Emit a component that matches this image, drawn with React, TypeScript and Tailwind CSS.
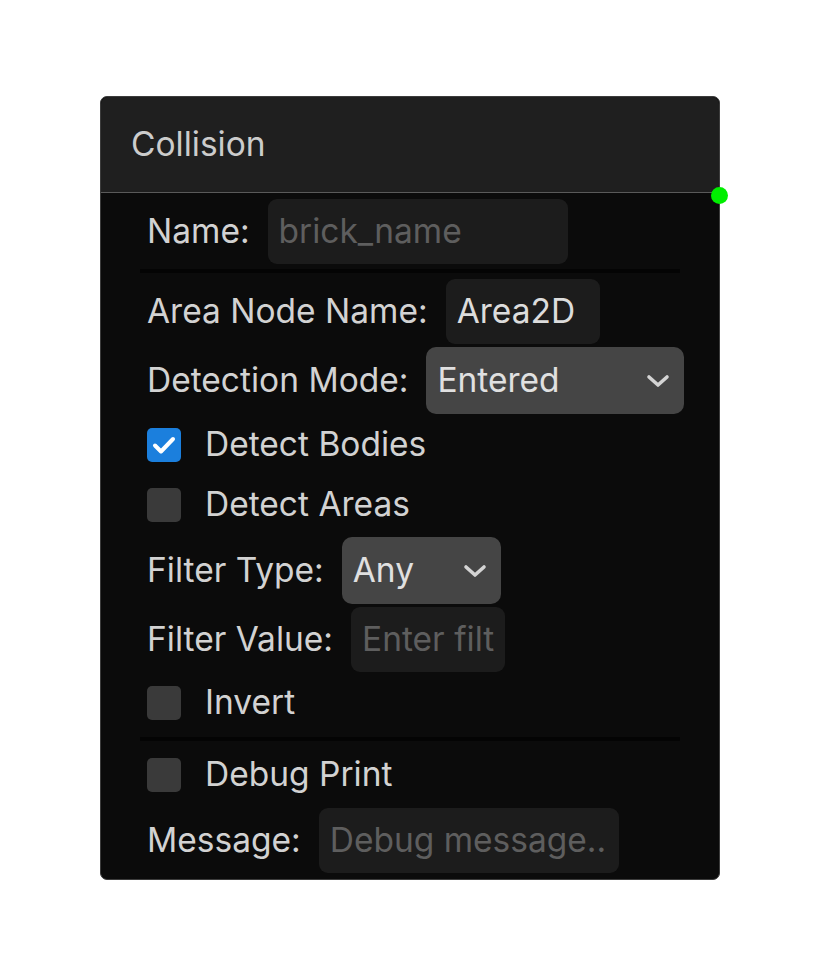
import React from 'react';

const Chevron = () => (
  <svg width="24" height="14" viewBox="0 0 24 14" fill="none" className="shrink-0">
    <path d="M3 3l9 8 9-8" stroke="#d4d4d4" strokeWidth="3.6" strokeLinecap="round" strokeLinejoin="round" />
  </svg>
);

const Label = ({ children }: { children: React.ReactNode }) => (
  <span className="text-[33.5px] leading-none text-[#d2d2d2] whitespace-nowrap">{children}</span>
);

const TextField = ({ value, placeholder, width }: { value?: string; placeholder?: string; width: string }) => (
  <div className={`h-[65px] ${width} shrink-0 rounded-[9px] bg-[#1c1c1c] pl-[11px] flex items-center overflow-hidden`}>
    {value ? (
      <span className="text-[33.5px] leading-none text-[#dcdcdc] whitespace-nowrap">{value}</span>
    ) : (
      <span className="text-[33.5px] leading-none text-[#5e5e5e] whitespace-nowrap">{placeholder}</span>
    )}
  </div>
);

const SelectField = ({ value, width }: { value: string; width: string }) => (
  <div className={`h-[67px] ${width} shrink-0 rounded-[10px] bg-[#454545] pl-[11px] pr-[14px] flex items-center justify-between`}>
    <span className="text-[33.5px] leading-none text-[#e0e0e0]">{value}</span>
    <Chevron />
  </div>
);

const Checkbox = ({ checked }: { checked?: boolean }) =>
  checked ? (
    <div className="w-[34px] h-[34px] shrink-0 rounded-[5px] bg-[#1b7fdd] flex items-center justify-center">
      <svg width="24" height="20" viewBox="0 0 24 20" fill="none">
        <path d="M3 10.5l6 6L21 4" stroke="#ffffff" strokeWidth="4" strokeLinecap="round" strokeLinejoin="round" />
      </svg>
    </div>
  ) : (
    <div className="w-[34px] h-[34px] shrink-0 rounded-[5px] bg-[#3a3a3a]" />
  );

const Separator = ({ className }: { className: string }) => (
  <div className={`h-[4px] bg-[#040404] ${className}`} />
);

export default function App() {
  return (
    <div className="min-h-[980px] w-[820px] bg-white pt-[96px] pl-[100px]" style={{ fontFamily: 'Inter, "Noto Sans", sans-serif' }}>
      <div className="relative w-[620px] rounded-[7px] border border-[#3c3c3c] bg-[#0b0b0b]">
        {/* header */}
        <div className="h-[96px] rounded-t-[7px] bg-[#1f1f1f] border-b border-[#5a5a5a] flex items-center pl-[30px]">
          <span className="text-[33.5px] leading-none text-[#cccccc]">Collision</span>
        </div>

        {/* output port */}
        <div className="absolute right-[-9px] top-[90px] w-[17px] h-[17px] rounded-full bg-[#00ee00]" />

        <div className="px-[39px] pt-[6px] pb-[6px]">
          <div className="px-[7px] flex items-center gap-[18px]">
            <Label>Name:</Label>
            <TextField placeholder="brick_name" width="w-[300px]" />
          </div>

          <Separator className="mt-[5px]" />

          <div className="mt-[6px] px-[7px] flex items-center gap-[18px]">
            <Label>Area Node Name:</Label>
            <TextField value="Area2D" width="w-[154px]" />
          </div>

          <div className="mt-[3px] px-[7px] flex items-center gap-[18px]">
            <Label>Detection Mode:</Label>
            <SelectField value="Entered" width="w-[258px]" />
          </div>

          <div className="mt-[14px] px-[7px] flex items-center gap-[24px]">
            <Checkbox checked />
            <Label>Detect Bodies</Label>
          </div>

          <div className="mt-[26px] px-[7px] flex items-center gap-[24px]">
            <Checkbox />
            <Label>Detect Areas</Label>
          </div>

          <div className="mt-[15px] px-[7px] flex items-center gap-[18px]">
            <Label>Filter Type:</Label>
            <SelectField value="Any" width="w-[159px]" />
          </div>

          <div className="mt-[3px] px-[7px] flex items-center gap-[18px]">
            <Label>Filter Value:</Label>
            <TextField placeholder="Enter filt" width="w-[154px]" />
          </div>

          <div className="mt-[14px] px-[7px] flex items-center gap-[24px]">
            <Checkbox />
            <Label>Invert</Label>
          </div>

          <Separator className="mt-[17px]" />

          <div className="mt-[17px] px-[7px] flex items-center gap-[24px]">
            <Checkbox />
            <Label>Debug Print</Label>
          </div>

          <div className="mt-[16px] px-[7px] flex items-center gap-[18px]">
            <Label>Message:</Label>
            <TextField placeholder="Debug message.." width="w-[300px]" />
          </div>
        </div>
      </div>
    </div>
  );
}
